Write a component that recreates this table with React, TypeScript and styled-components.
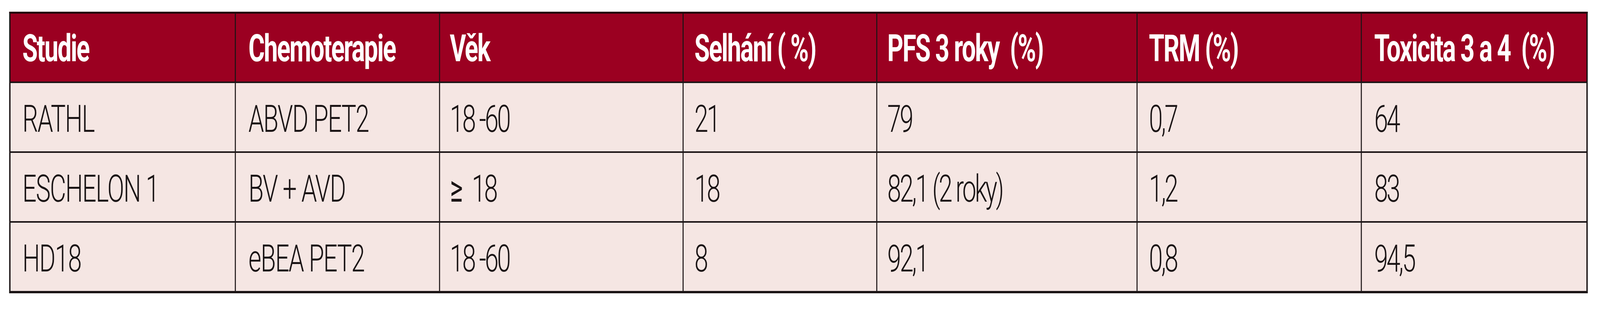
import React, { useLayoutEffect, useState } from "react";
import styled, { createGlobalStyle } from "styled-components";

const REF_W = 6221;

const Global = createGlobalStyle`
  html, body { margin: 0; padding: 0; background: #ffffff; overflow: hidden; }
  body { font-family: Roboto, "Liberation Sans", Arial, sans-serif; }
`;

const Viewport = styled.div`
  width: 100vw;
  height: 800px;
  overflow: hidden;
`;

const Frame = styled.div`
  width: ${REF_W}px;
  height: 800px;
  box-sizing: border-box;
  padding: 30px 0 0 36px;
  transform-origin: 0 0;
`;

const Table = styled.div`
  display: grid;
  grid-template-columns: 872px 790px 943px 749px 1008px 868px 873px;
  grid-template-rows: 174px;
  grid-auto-rows: 175px;
  gap: 4px;
  width: max-content;
  background: #1c1516;
  border: 5px solid #1c1516;
  border-top-color: #240208;
  border-bottom-width: 6px;
`;

const Cell = styled.div<{ $head?: boolean; $num?: boolean; $pad: number }>`
  display: flex;
  align-items: center;
  box-sizing: border-box;
  padding: ${(p) => (p.$head ? "4px" : "10px")} 0 0 ${(p) => p.$pad}px;
  background: ${(p) => (p.$head ? "#9b0021" : "#f5e6e3")};
  color: ${(p) => (p.$head ? "#ffffff" : "#1a1415")};
  font-family: Roboto, "Liberation Sans", Arial, sans-serif;
  font-size: 97px;
  font-weight: ${(p) => (p.$head ? 700 : 300)};
  letter-spacing: ${(p) => (p.$head ? "-0.035em" : p.$num ? "-0.06em" : "-0.03em")};
  white-space: pre;
  line-height: 1;
`;

const Sym = styled.span`
  font-weight: 400;
  margin-right: 22px;
`;

const pads = [46, 49, 38, 42, 39, 44, 48];

const head = [
  "Studie",
  "Chemoterapie",
  "Věk",
  "Selhání ( %)",
  "PFS 3 roky  (%)",
  "TRM (%)",
  "Toxicita 3 a 4  (%)",
];

const rows = [
  ["RATHL", "ABVD PET2", "18 -60", "21", "79", "0,7", "64"],
  ["ESCHELON 1", "BV + AVD", "≥ 18", "18", "82,1 (2 roky)", "1,2", "83"],
  ["HD18", "eBEA PET2", "18 -60", "8", "92,1", "0,8", "94,5"],
];

function useFitScale() {
  const get = () =>
    typeof window === "undefined" ? 1 : Math.min(1, window.innerWidth / REF_W);
  const [s, setS] = useState(get);
  useLayoutEffect(() => {
    const on = () => setS(get());
    on();
    window.addEventListener("resize", on);
    return () => window.removeEventListener("resize", on);
  }, []);
  return s;
}

function renderValue(v: string) {
  if (v.startsWith("≥ ")) {
    return (
      <>
        <Sym>≥ </Sym>
        {v.slice(2)}
      </>
    );
  }
  return v;
}

export default function App() {
  const sx = useFitScale();
  return (
    <>
      <Global />
      <Viewport>
        <Frame style={{ transform: `scale(${sx}, 1)` }}>
          <Table role="table">
            {head.map((h, i) => (
              <Cell key={"h" + i} $head $pad={pads[i]} role="columnheader">
                {h}
              </Cell>
            ))}
            {rows.map((r, ri) =>
              r.map((c, ci) => (
                <Cell key={ri + "-" + ci} $pad={pads[ci]} $num={ci >= 2} role="cell">
                  {renderValue(c)}
                </Cell>
              ))
            )}
          </Table>
        </Frame>
      </Viewport>
    </>
  );
}
